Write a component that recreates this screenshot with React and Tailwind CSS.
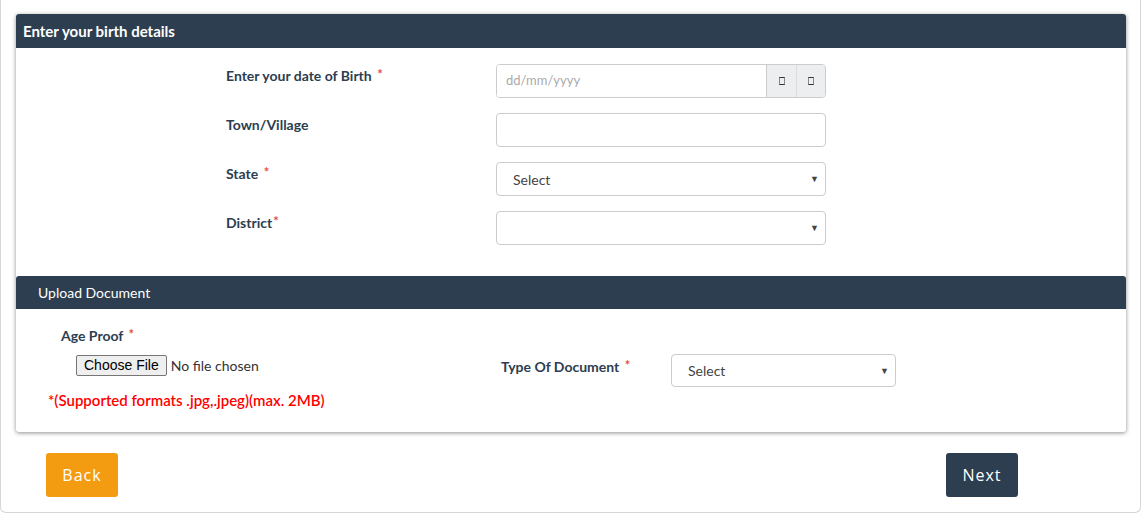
const Star = ({ className = "" }) => (
  <span className={`text-[#e74c3c] text-[13px] relative -top-[2px] ${className}`}>*</span>
);

const Caret = () => (
  <span className="absolute right-[6px] top-1/2 -translate-y-1/2 text-[9px] text-[#444]">▼</span>
);

const Tofu = () => (
  <span className="inline-block w-[6px] h-[8px] border border-[#333] border-x-[#888]" />
);

const Row = ({ label, children }) => (
  <div className="flex items-start">
    <div className="w-[270px] pt-[1px] text-[14px] font-bold text-[#2c3e50]">{label}</div>
    <div className="w-[330px]">{children}</div>
  </div>
);

export default function App() {
  return (
    <div
      className="w-[1141px] h-[513px] bg-white border-x border-b border-[#d6d6d6] rounded-b-[6px] px-[15px] pt-[14px] overflow-hidden"
      style={{ fontFamily: "Lato, 'Open Sans', sans-serif" }}
    >
      <div className="w-[1110px] bg-white rounded-t-[3px] rounded-b-[3px] shadow-[0_1px_4px_rgba(0,0,0,0.45)]">
        <div className="h-[34px] bg-[#2c3e50] rounded-t-[3px] px-[7px] flex items-center text-white text-[15px] font-bold">
          Enter your birth details
        </div>
        <div className="pl-[210px] pt-[16px] pb-[31px] flex flex-col gap-[15px]">
          <Row
            label={
              <>
                Enter your date of Birth <Star className="ml-[2px]" />
              </>
            }
          >
            <div className="flex h-[34px] border border-[#ccc] rounded-[4px] overflow-hidden">
              <div className="flex-1 flex items-center pl-[9px] text-[13px] text-[#aaa] bg-white">dd/mm/yyyy</div>
              <div className="w-[30px] bg-[#eceeef] border-l border-[#ccc] flex items-center justify-center">
                <Tofu />
              </div>
              <div className="w-[29px] bg-[#eceeef] border-l border-[#dcdcdc] flex items-center justify-center">
                <Tofu />
              </div>
            </div>
          </Row>
          <Row label="Town/Village">
            <div className="h-[34px] border border-[#ccc] rounded-[4px]" />
          </Row>
          <Row
            label={
              <>
                State <Star className="ml-[2px]" />
              </>
            }
          >
            <div className="relative h-[34px] border border-[#ccc] rounded-[4px] flex items-center pl-[16px] text-[14px] text-[#444]">
              Select
              <Caret />
            </div>
          </Row>
          <Row
            label={
              <>
                District<Star className="ml-[1px]" />
              </>
            }
          >
            <div className="relative h-[34px] border border-[#ccc] rounded-[4px]">
              <Caret />
            </div>
          </Row>
        </div>

        <div className="h-[33px] bg-[#2c3e50] rounded-t-[3px] pl-[22px] flex items-center text-white text-[14px]">
          Upload Document
        </div>
        <div className="h-[123px] flex">
          <div className="w-[485px] flex flex-col">
            <div className="pl-[45px] pt-[18px] text-[14px] font-bold text-[#2c3e50] leading-[18px]">
              Age Proof <Star className="ml-[2px]" />
            </div>
            <div className="pl-[60px] pt-[10px] flex items-center gap-[4px]">
              <span
                className="h-[21px] px-[7px] flex items-center bg-[#efefef] border border-[#767676] rounded-[2px] text-[14px] text-black"
                style={{ fontFamily: "'Liberation Sans', Arial, sans-serif" }}
              >
                Choose File
              </span>
              <span className="text-[14px] text-[#333]">No file chosen</span>
            </div>
            <div className="pl-[32px] pt-[13px] text-[15px] font-semibold text-[#ff0000]">
              *(Supported formats .jpg,.jpeg)(max. 2MB)
            </div>
          </div>
          <div className="flex items-start pt-[45px]">
            <div className="w-[170px] pt-[2px] text-[14px] font-bold text-[#2c3e50]">
              Type Of Document <Star className="ml-[2px]" />
            </div>
            <div className="relative w-[225px] h-[33px] border border-[#ccc] rounded-[4px] flex items-center pl-[16px] text-[14px] text-[#444]">
              Select
              <Caret />
            </div>
          </div>
        </div>
      </div>

      <div className="flex justify-between pl-[30px] pr-[107px] pt-[21px]">
        <button
          className="w-[72px] h-[44px] bg-[#f39c12] rounded-[3px] text-white text-[16px] tracking-[1px]"
          style={{ fontFamily: "'Open Sans', sans-serif" }}
        >
          Back
        </button>
        <button
          className="w-[72px] h-[44px] bg-[#2c3e50] rounded-[3px] text-white text-[16px] tracking-[1px]"
          style={{ fontFamily: "'Open Sans', sans-serif" }}
        >
          Next
        </button>
      </div>
    </div>
  );
}
